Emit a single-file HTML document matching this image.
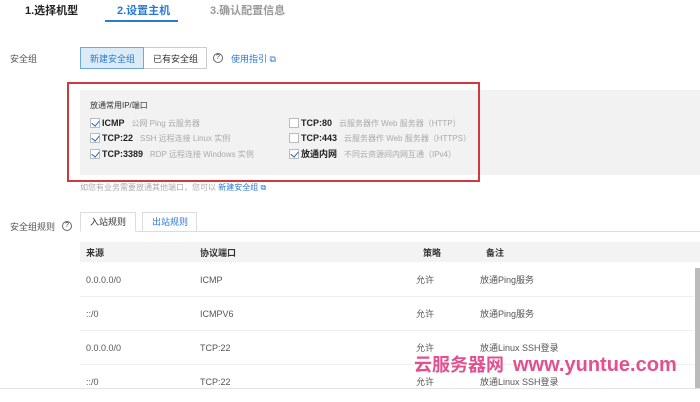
<!DOCTYPE html>
<html><head><meta charset="utf-8"><style>
*{margin:0;padding:0;box-sizing:border-box}
body{width:700px;height:402px;background:#fff;position:relative;overflow:hidden;font-family:"Liberation Sans","Noto Sans CJK SC",sans-serif;font-size:9px;color:#333}
.a{position:absolute;white-space:nowrap;line-height:12px}
.cb{position:absolute;width:10px;height:10px;border:1px solid #bbb;background:#fff}
.cb.on::after{content:"";position:absolute;left:2px;top:0px;width:4px;height:6px;border:solid #2a6ab0;border-width:0 1.5px 1.5px 0;transform:rotate(40deg)}
.g{color:#aaa;font-size:8px}
b{font-weight:bold;color:#222}
.blue{color:#2a7ad0}
.r{color:#555}
</style></head><body>
<div class="a" style="left:25px;top:4px;font-size:11px;font-weight:bold;color:#222;line-height:14px">1.选择机型</div>
<div class="a" style="left:117px;top:4px;font-size:11px;font-weight:bold;color:#2a7ad0;line-height:14px">2.设置主机</div>
<div style="position:absolute;left:105px;top:20px;width:73px;height:2px;background:#2a7ad0"></div>
<div class="a" style="left:210px;top:4px;font-size:11px;font-weight:bold;color:#999;line-height:14px">3.确认配置信息</div>

<div class="a" style="left:10px;top:53px;color:#555">安全组</div>
<div style="position:absolute;left:80px;top:47px;width:64px;height:22px;background:#dcebf8;border:1px solid #6fa8dc"></div>
<div class="a blue" style="left:90px;top:53px">新建安全组</div>
<div style="position:absolute;left:144px;top:47px;width:63px;height:22px;border:1px solid #ccc;border-left:none"></div>
<div class="a" style="left:153px;top:53px">已有安全组</div>
<div style="position:absolute;left:213px;top:53px;width:10px;height:10px;border:1px solid #666;border-radius:50%;font-size:7px;text-align:center;line-height:8px">?</div>
<div class="a blue" style="left:231px;top:53px">使用指引 ⧉</div>

<div style="position:absolute;left:80px;top:90px;width:620px;height:85px;background:#f2f2f2"></div>
<div style="position:absolute;left:67px;top:82px;width:413px;height:100px;border:2px solid #d0393e"></div>
<div class="a" style="left:90px;top:100px;font-size:8px">放通常用IP/端口</div>

<div class="cb on" style="left:90px;top:118px"></div><div class="a" style="left:102px;top:117px"><b>ICMP</b> <span class="g">&nbsp; 公网 Ping 云服务器</span></div>
<div class="cb on" style="left:90px;top:133px"></div><div class="a" style="left:102px;top:132px"><b>TCP:22</b> <span class="g">&nbsp; SSH 远程连接 Linux 实例</span></div>
<div class="cb on" style="left:90px;top:149px"></div><div class="a" style="left:102px;top:148px"><b>TCP:3389</b> <span class="g">&nbsp; RDP 远程连接 Windows 实例</span></div>
<div class="cb" style="left:289px;top:118px"></div><div class="a" style="left:301px;top:117px"><b>TCP:80</b> <span class="g">&nbsp; 云服务器作 Web 服务器（HTTP）</span></div>
<div class="cb" style="left:289px;top:133px"></div><div class="a" style="left:301px;top:132px"><b>TCP:443</b> <span class="g">&nbsp; 云服务器作 Web 服务器（HTTPS）</span></div>
<div class="cb on" style="left:289px;top:149px"></div><div class="a" style="left:301px;top:148px"><b>放通内网</b> <span class="g">&nbsp; 不同云资源间内网互通（IPv4）</span></div>

<div class="a g" style="left:80px;top:182px;font-size:8px">如您有业务需要放通其他端口，您可以 <span class="blue">新建安全组 ⧉</span></div>

<div class="a" style="left:10px;top:221px;color:#555">安全组规则</div>
<div style="position:absolute;left:62px;top:221px;width:10px;height:10px;border:1px solid #666;border-radius:50%;font-size:7px;text-align:center;line-height:8px">?</div>
<div style="position:absolute;left:80px;top:231px;width:620px;height:1px;background:#ddd"></div>
<div style="position:absolute;left:80px;top:212px;width:56px;height:20px;border:1px solid #ddd;border-bottom:1px solid #fff;background:#fff"></div>
<div class="a" style="left:90px;top:216px">入站规则</div>
<div style="position:absolute;left:142px;top:212px;width:55px;height:20px;border:1px solid #ddd;background:#fff"></div>
<div class="a blue" style="left:152px;top:216px">出站规则</div>

<div style="position:absolute;left:80px;top:242px;width:620px;height:20px;background:#f3f3f3"></div>
<div class="a" style="left:86px;top:247px;font-weight:bold">来源</div>
<div class="a" style="left:200px;top:247px;font-weight:bold">协议端口</div>
<div class="a" style="left:423px;top:247px;font-weight:bold">策略</div>
<div class="a" style="left:486px;top:247px;font-weight:bold">备注</div>

<div class="a r" style="left:86px;top:274px">0.0.0.0/0</div><div class="a r" style="left:200px;top:274px">ICMP</div><div class="a r" style="left:416px;top:274px">允许</div><div class="a r" style="left:480px;top:274px">放通Ping服务</div>
<div style="position:absolute;left:80px;top:296px;width:614px;height:1px;background:#eee"></div>
<div class="a r" style="left:86px;top:308px">::/0</div><div class="a r" style="left:200px;top:308px">ICMPV6</div><div class="a r" style="left:416px;top:308px">允许</div><div class="a r" style="left:480px;top:308px">放通Ping服务</div>
<div style="position:absolute;left:80px;top:330px;width:614px;height:1px;background:#eee"></div>
<div class="a r" style="left:86px;top:342px">0.0.0.0/0</div><div class="a r" style="left:200px;top:342px">TCP:22</div><div class="a r" style="left:416px;top:342px">允许</div><div class="a r" style="left:480px;top:342px">放通Linux SSH登录</div>
<div style="position:absolute;left:80px;top:364px;width:614px;height:1px;background:#eee"></div>
<div class="a r" style="left:86px;top:376px">::/0</div><div class="a r" style="left:200px;top:376px">TCP:22</div><div class="a r" style="left:416px;top:376px">允许</div><div class="a r" style="left:480px;top:376px">放通Linux SSH登录</div>
<div style="position:absolute;left:0;top:388px;width:700px;height:1px;background:#e4e4e4"></div>
<div style="position:absolute;left:695px;top:268px;width:5px;height:120px;background:#bbb"></div>

<div class="a" style="left:414px;top:354px;font-size:18px;font-weight:bold;color:#e2508f;line-height:22px">云服务器网<span style="font-family:'Liberation Sans',sans-serif;font-size:20px;margin-left:9px">www.yuntue.com</span></div>
</body></html>
